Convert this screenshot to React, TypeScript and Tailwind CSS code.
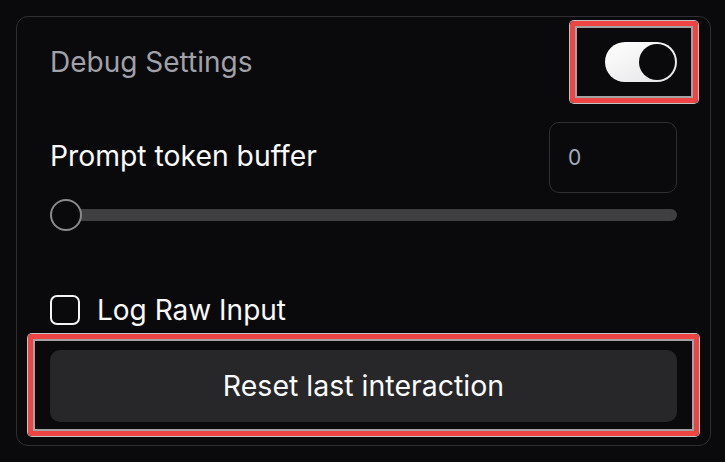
import { useState } from 'react';

function Highlight({ className }: { className: string }) {
  return (
    <div
      className={`pointer-events-none absolute rounded-[4px] border-[5px] border-[#ef4444] shadow-[0_0_0_1px_#c4c4c4,inset_0_0_0_2px_#a3a3a3] ${className}`}
    />
  );
}

export default function App() {
  const [debug, setDebug] = useState(true);
  const [logRaw, setLogRaw] = useState(false);
  const [buffer, setBuffer] = useState(0);

  return (
    <div className="h-[462px] w-[725px] bg-[#0a0a0c] pt-4 pr-[14px] pl-4 font-['Inter',sans-serif] antialiased">
      <div className="flex h-[430px] flex-col rounded-[12px] border border-[#2f2f33] pt-[25px] pr-[33px] pb-[23px] pl-[33px]">
        <div className="flex h-10 items-center justify-between">
          <span className="text-[28px] leading-none text-[#a1a1aa]">Debug Settings</span>
          <div className="relative">
            <button
              onClick={() => setDebug(!debug)}
              className={`flex h-10 w-[72px] items-center rounded-full p-[2px] ${
                debug ? 'justify-end bg-linear-to-br from-white to-[#e4e4e7]' : 'justify-start bg-[#3f3f46]'
              }`}
              aria-label="Debug Settings"
            >
              <span className="h-9 w-9 rounded-full bg-[#0a0a0c]" />
            </button>
            <Highlight className="-top-[21px] -left-[35px] h-[82px] w-[128px]" />
          </div>
        </div>

        <div className="mt-10 flex items-center justify-between">
          <span className="-mt-[2px] text-[28.3px] leading-none text-[#fafafa]">Prompt token buffer</span>
          <input
            value={buffer}
            onChange={(event) => setBuffer(Number(event.target.value) || 0)}
            className="h-[71px] w-32 rounded-[10px] border border-[#2f2f33] bg-transparent px-[18px] text-[21px] text-[#a3adbd] outline-none"
          />
        </div>

        <div className="relative mt-[6px] flex h-8 items-center">
          <div className="h-3 w-full rounded-full bg-[#3f3f42]" />
          <div className="absolute left-0 h-8 w-8 rounded-full border-2 border-[#8a8a8e] bg-[#0a0a0c]" />
        </div>

        <label className="mt-16 flex items-center gap-[17px]">
          <button
            onClick={() => setLogRaw(!logRaw)}
            className="h-[30px] w-[30px] rounded-[7px] border-2 border-[#f4f4f5]"
            aria-label="Log Raw Input"
          />
          <span className="text-[28px] leading-none text-[#fafafa]">Log Raw Input</span>
        </label>

        <div className="relative mt-[25px]">
          <button className="h-[72px] w-full rounded-[10px] bg-[#27272a] text-[28.5px] text-[#fafafa]">
            Reset last interaction
          </button>
          <Highlight className="-top-4 -left-[22px] h-[102px] w-[671px]" />
        </div>
      </div>
    </div>
  );
}
